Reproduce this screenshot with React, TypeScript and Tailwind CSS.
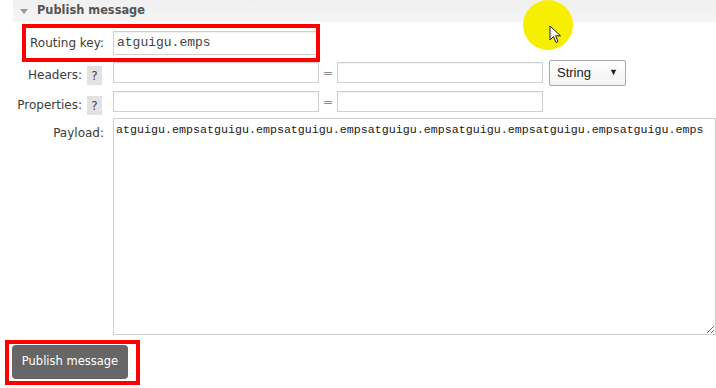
import React from "react";

/* ================= SMALL PIECES ================= */

function HelpBox() {
  return (
    <span className="ml-[5px] mt-[6px] flex h-[19px] w-[15px] items-center justify-center bg-[#e2e2e2] text-[12px] text-[#444]">
      ?
    </span>
  );
}

function TextInput({ w, value = "", mono = false }: { w: string; value?: string; mono?: boolean }) {
  return (
    <div
      className={`${w} flex h-full items-center border border-[#d0d0d0] bg-white pl-[3px] shadow-[inset_0_1px_1px_rgba(0,0,0,0.06)] ${
        mono ? "font-['Liberation_Mono',monospace] text-[13px] text-[#444]" : ""
      }`}
    >
      {value}
    </div>
  );
}

function Cursor() {
  return (
    <svg width="14" height="20" viewBox="0 0 14 20" className="absolute left-[549px] top-[25px]">
      <path d="M1 1 L1 15 L4.5 11.5 L7 17.5 L9 16.6 L6.6 10.8 L11.5 10.8 Z" fill="#fff" stroke="#222" strokeWidth="1" strokeLinejoin="round" />
    </svg>
  );
}

/* ================= PAGE ================= */

export default function App() {
  const payload = "atguigu.emps".repeat(7);

  return (
    <div className="relative h-[388px] w-[716px] overflow-hidden bg-white font-['DejaVu_Sans',sans-serif] text-[12px] text-[#3c3c3c]">
      {/* section header */}
      <div className="ml-[13px] flex h-[22px] items-center bg-gradient-to-b from-[#f0f0f0] to-[#f5f5f5] pl-[7px]">
        <span className="mt-[1px] h-0 w-0 border-x-[4px] border-t-[5px] border-x-transparent border-t-[#9a9a9a]" />
        <span className="ml-[9px] text-[11.4px] font-bold text-[#555]">Publish message</span>
      </div>

      {/* routing key */}
      <div className="mt-[9px] flex h-[24px] items-center">
        <label className="w-[104px] text-right">Routing key:</label>
        <div className="ml-[9px] h-full">
          <TextInput w="w-[206px]" value="atguigu.emps" mono />
        </div>
      </div>

      {/* headers */}
      <div className="mt-[5px] flex h-[26px] items-start">
        <label className="mt-[6px] w-[82px] text-right">Headers:</label>
        <HelpBox />
        <div className="ml-[11px] mt-[2px] flex h-[21px] items-center">
          <TextInput w="w-[206px]" />
          <span className="w-[18px] text-center text-[#888]">=</span>
          <TextInput w="w-[206px]" />
        </div>
        <div className="ml-[6px] flex h-[26px] w-[77px] items-center justify-between rounded-[2px] border border-[#a8a8a8] bg-gradient-to-b from-white to-[#f2f2f2] pl-[7px] pr-[7px] font-['Liberation_Sans',sans-serif] text-[13px] text-[#222]">
          <span>String</span>
          <span className="text-[9px]">▼</span>
        </div>
      </div>

      {/* properties */}
      <div className="mt-[5px] flex h-[24px] items-start">
        <label className="mt-[5px] w-[82px] text-right">Properties:</label>
        <span className="-mt-[1px]">
          <HelpBox />
        </span>
        <div className="ml-[11px] flex h-[21px] items-center">
          <TextInput w="w-[206px]" />
          <span className="w-[18px] text-center text-[#888]">=</span>
          <TextInput w="w-[206px]" />
        </div>
      </div>

      {/* payload */}
      <div className="mt-[3px] flex items-start">
        <label className="mt-[6px] w-[104px] text-right">Payload:</label>
        <textarea
          readOnly
          value={payload}
          className="ml-[9px] h-[217px] w-[603px] resize border border-[#d0d0d0] bg-white pl-[2px] pt-[4px] font-['Liberation_Mono',monospace] text-[11.67px] leading-[14px] text-[#222] outline-none"
        />
      </div>

      {/* submit */}
      <button className="ml-[12px] mt-[10px] h-[34px] w-[116px] rounded-[4px] bg-[#666] text-[11.5px] text-white">
        Publish message
      </button>

      {/* annotation boxes */}
      <div className="pointer-events-none absolute left-[22px] top-[24px] h-[38px] w-[298px] border-[4px] border-[#f00]" />
      <div className="pointer-events-none absolute left-[5px] top-[340px] h-[45px] w-[135px] border-[4px] border-[#f00]" />

      {/* mouse highlight */}
      <div className="pointer-events-none absolute left-[523px] top-0 h-[50px] w-[50px] rounded-full bg-[#f6ef00]" />
      <Cursor />
    </div>
  );
}
